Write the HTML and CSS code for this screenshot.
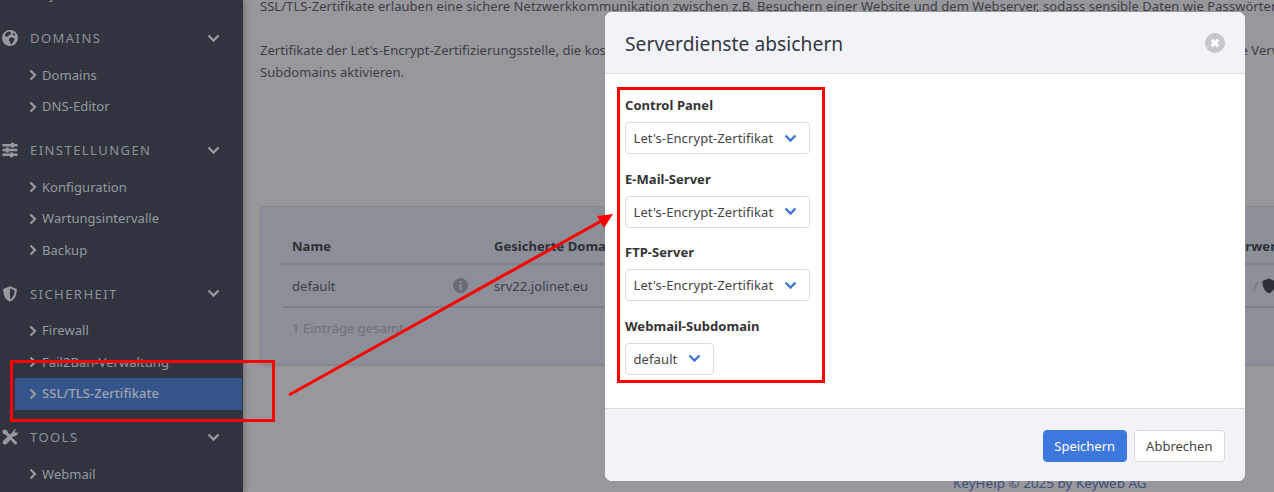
FILE: index.html
```html
<!DOCTYPE html>
<html lang="de">
<head>
<meta charset="utf-8">
<title>SSL/TLS-Zertifikate</title>
<link rel="stylesheet" href="styles.css">
</head>
<body>
<div class="page">
  <aside class="sidebar">
    <a class="item first"><svg class="caret" viewBox="0 0 8 12"><path d="M1.500 1.500 6 6l-4.500 4.500"/></svg>System</a>
    <div class="section">
      <svg class="sec-icon" viewBox="0 0 16 16"><path fill-rule="evenodd" d="M8 0a8 8 0 1 0 0 16A8 8 0 0 0 8 0ZM4.800 2.200 7.800 1.500l1.300 1.200-.8 2-1.600.4-.5 1.400-1.800.3L2.600 5l2.200-2.800Zm4 5.100 3 .6.900 1.600-1.500 2.500-1.200 1.800-1.400.4-.6-2.800-1.200-1.200.4-1.700 1.600-1.200ZM11.300 2.700l2.100 2.100-1.300.9-1.400-1.400.6-1.600Z"/></svg>
      <span class="sec-name">Domains</span>
      <svg class="sec-chev" viewBox="0 0 13 9"><path d="M1.500 1.500 6.500 6.500l5-5"/></svg>
    </div>
    <a class="item"><svg class="caret" viewBox="0 0 8 12"><path d="M1.500 1.500 6 6l-4.500 4.500"/></svg>Domains</a>
    <a class="item"><svg class="caret" viewBox="0 0 8 12"><path d="M1.500 1.500 6 6l-4.500 4.500"/></svg>DNS-Editor</a>
    <div class="section">
      <svg class="sec-icon" viewBox="0 0 16 16"><path d="M.5 2h15v2.400H.5zM.5 6.800h15v2.400H.5zM.5 11.600h15V14H.5z"/><path d="M9 .8h3v4.800H9zM3.800 5.600h3v4.800h-3zM8 10.400h3v4.800H8z"/></svg>
      <span class="sec-name">Einstellungen</span>
      <svg class="sec-chev" viewBox="0 0 13 9"><path d="M1.500 1.500 6.500 6.500l5-5"/></svg>
    </div>
    <a class="item"><svg class="caret" viewBox="0 0 8 12"><path d="M1.500 1.500 6 6l-4.500 4.500"/></svg>Konfiguration</a>
    <a class="item"><svg class="caret" viewBox="0 0 8 12"><path d="M1.500 1.500 6 6l-4.500 4.500"/></svg>Wartungsintervalle</a>
    <a class="item"><svg class="caret" viewBox="0 0 8 12"><path d="M1.500 1.500 6 6l-4.500 4.500"/></svg>Backup</a>
    <div class="section">
      <svg class="sec-icon" viewBox="0 0 16 16"><path fill-rule="evenodd" d="M8 .2 14.800 3c0 6.200-1.600 10.200-6.800 12.800C2.800 13.200 1.200 9.200 1.200 3L8 .2Zm0 2.300v10.900c3.100-1.900 4.400-4.700 4.600-8.900L8 2.500Z"/></svg>
      <span class="sec-name">Sicherheit</span>
      <svg class="sec-chev" viewBox="0 0 13 9"><path d="M1.500 1.500 6.500 6.500l5-5"/></svg>
    </div>
    <a class="item"><svg class="caret" viewBox="0 0 8 12"><path d="M1.500 1.500 6 6l-4.500 4.500"/></svg>Firewall</a>
    <a class="item"><svg class="caret" viewBox="0 0 8 12"><path d="M1.500 1.500 6 6l-4.500 4.500"/></svg>Fail2Ban-Verwaltung</a>
    <a class="item active"><svg class="caret" viewBox="0 0 8 12"><path d="M1.500 1.500 6 6l-4.500 4.500"/></svg>SSL/TLS-Zertifikate</a>
    <div class="section">
      <svg class="sec-icon" viewBox="0 0 16 16"><path d="M2.200.2 5.200 1.400l.7 2.200L8 5.700 10.600 3c.4-1.500 1.800-3 4-2.800L12.700 2.300l.4 1.300 1.400.3L16 2.400c.4 2.500-1.500 5-4.400 4.800L10 8.800l5 4.400-.2 1.800-1.800.8-4.500-5L4 15.800 .6 14.700 1 12l4.500-4.200L3.400 5.500 1.200 4.900.2 2.300z"/></svg>
      <span class="sec-name">Tools</span>
      <svg class="sec-chev" viewBox="0 0 13 9"><path d="M1.500 1.500 6.500 6.500l5-5"/></svg>
    </div>
    <a class="item"><svg class="caret" viewBox="0 0 8 12"><path d="M1.500 1.500 6 6l-4.500 4.500"/></svg>Webmail</a>
  </aside>

  <main class="main">
    <p class="intro">SSL/TLS-Zertifikate erlauben eine sichere Netzwerkkommunikation zwischen z.B. Besuchern einer Website und dem Webserver, sodass sensible Daten wie Passwörter geschützt werden.</p>
    <p class="intro second">Zertifikate der Let's-Encrypt-Zertifizierungsstelle, die kostenlos ausgestellt sind, können Sie für Domains und Subdomains im Control Panel anfordern und für die Verwendung<br>Subdomains aktivieren.</p>
    <section class="card">
      <div class="row head">
        <span class="cell">Name</span>
        <span class="cell">Gesicherte Domains</span>
        <span class="cell end">Serververwendung</span>
      </div>
      <div class="row body">
        <span class="cell name-cell">default
          <svg class="info" viewBox="0 0 14 14"><circle cx="7" cy="7" r="7"/><path class="info-dot" d="M6 2.800h2v1.800H6zM6 5.800h2v5.400H6z"/></svg>
        </span>
        <span class="cell">srv22.jolinet.eu</span>
        <span class="cell end usage"><i class="slash">/</i><svg class="shield" viewBox="0 0 14 16"><path d="M7 .5 13.500 3c0 6-1.500 10-6.500 12.500C2 13 .5 9 .5 3L7 .5Z"/></svg></span>
      </div>
      <p class="total">1 Einträge gesamt</p>
    </section>
    <p class="copyright">KeyHelp © 2025 by Keyweb AG</p>
  </main>
</div>

<div class="dialog">
  <header class="dialog-head">
    <h2 class="dialog-title">Serverdienste absichern</h2>
    <span class="close"><svg viewBox="0 0 20 20"><path d="M6.800 6.800l6.400 6.400M13.200 6.800l-6.400 6.400"/></svg></span>
  </header>
  <div class="dialog-body">
    <div class="field">
      <span class="label">Control Panel</span>
      <div class="select">Let's-Encrypt-Zertifikat<svg viewBox="0 0 13 9"><path d="M1.500 1.500 6.500 6.500l5-5"/></svg></div>
    </div>
    <div class="field">
      <span class="label">E-Mail-Server</span>
      <div class="select">Let's-Encrypt-Zertifikat<svg viewBox="0 0 13 9"><path d="M1.500 1.500 6.500 6.500l5-5"/></svg></div>
    </div>
    <div class="field">
      <span class="label">FTP-Server</span>
      <div class="select">Let's-Encrypt-Zertifikat<svg viewBox="0 0 13 9"><path d="M1.500 1.500 6.500 6.500l5-5"/></svg></div>
    </div>
    <div class="field">
      <span class="label">Webmail-Subdomain</span>
      <div class="select">default<svg viewBox="0 0 13 9"><path d="M1.500 1.500 6.500 6.500l5-5"/></svg></div>
    </div>
  </div>
  <footer class="dialog-foot">
    <button class="btn primary">Speichern</button>
    <button class="btn">Abbrechen</button>
  </footer>
</div>

<svg class="annotations" viewBox="0 0 1274 492">
  <rect x="11.500" y="361.500" width="262" height="59"/>
  <rect x="618.500" y="88.500" width="205" height="293"/>
  <line x1="289" y1="395" x2="603" y2="220"/>
  <polygon points="613,214 597,216 604,228"/>
</svg>
</body>
</html>
```
FILE: styles.css
```css
* { box-sizing: border-box; }
html, body { margin: 0; height: 492px; overflow: hidden; }
body {
  position: relative;
  font-family: "Noto Sans", sans-serif;
  font-size: 13px;
  letter-spacing: .05px;
  color: #3a3b40;
  background: #97979c;
}
.page { display: flex; height: 492px; overflow: hidden; }

/* sidebar */
.sidebar {
  flex: 0 0 243px;
  background: #30343f;
  color: #97999f;
  box-shadow: 2px 0 5px rgba(0, 0, 0, .22);
  position: relative;
  z-index: 1;
  overflow: hidden;
}
.item {
  display: flex;
  align-items: center;
  height: 31.500px;
  margin-left: 15px;
  margin-right: 1px;
  padding-left: 14px;
  font-size: 13px;
  line-height: 1;
  white-space: nowrap;
}
.item.first { margin-top: -21px; }
.item.active { background: #355489; color: #9da4b4; font-weight: 500; }
.caret {
  width: 8px; height: 12px;
  margin-right: 5px;
  fill: none; stroke: #97999f; stroke-width: 2.200;
}
.section {
  display: flex;
  align-items: center;
  height: 30px;
  margin-top: 12.500px;
  margin-bottom: 6.500px;
  padding-left: 2px;
  color: #8f9198;
}
.sec-icon { width: 16px; height: 16px; fill: #97999f; flex: none; }
.sec-name {
  margin-left: 12px;
  font-size: 13px;
  letter-spacing: 1.450px;
  text-transform: uppercase;
  flex: 1;
}
.sec-chev {
  width: 13px; height: 9px;
  margin-right: 23px;
  fill: none; stroke: #97999f; stroke-width: 2.400;
}

/* main */
.main {
  flex: 1;
  min-width: 0;
  padding-left: 17px;
  overflow: hidden;
}
.intro {
  margin: -5px 0 0;
  font-size: 13px;
  line-height: 22px;
  white-space: nowrap;
  color: #3e3f45;
}
.intro.second { margin-top: 22px; }
.card {
  width: 1120px;
  height: 159px;
  margin-top: 123px;
  padding: 22px 21px 21px;
  background: #8c8e98;
  border: 1px solid #85878f;
  border-radius: 5px;
  box-shadow: 0 1px 2px rgba(0,0,0,.12);
}
.row {
  display: grid;
  grid-template-columns: 202px 1fr auto;
  align-items: center;
  border-bottom: 2px solid #7f8089;
}
.row.head { height: 36px; font-weight: 700; color: #2f3036; }
.row.body { height: 43px; color: #3e3f45; }
.cell { padding-left: 10px; }
.end { width: 170px; padding-left: 0; white-space: nowrap; }
.name-cell { display: flex; align-items: center; justify-content: space-between; padding-right: 16px; }
.info { width: 15px; height: 15px; fill: #696b74; }
.info-dot { fill: #8c8e98; }
.usage { display: flex; align-items: center; padding-left: 65px; }
.slash { font-style: normal; color: #70727b; margin-right: 4px; }
.shield { width: 14px; height: 16px; fill: #2d2f37; flex: none; }
.total { margin: 11px 0 0 10px; color: #6f717b; line-height: 18px; }
.copyright {
  margin: 109px 0 0 693px;
  font-size: 13.400px;
  color: #3f4f7a;
  white-space: nowrap;
}

/* dialog */
.dialog {
  position: absolute;
  z-index: 2;
  left: 605px; top: 12px;
  width: 640px; height: 469px;
  display: flex; flex-direction: column;
  background: #fff;
  border-radius: 7px;
  overflow: hidden;
}
.dialog-head {
  flex: 0 0 62px;
  display: flex; align-items: center; justify-content: space-between;
  padding: 2px 20px 0;
  background: #f1f3f9;
  border-bottom: 1px solid #dcdde1;
}
.dialog-title { margin: 0; font-size: 19.200px; font-weight: 400; color: #33373f; }
.close { width: 20px; height: 20px; margin-top: -2px; border-radius: 50%; background: #c6c6cc; display: block; }
.close svg { display: block; width: 20px; height: 20px; fill: none; stroke: #fff; stroke-width: 3; }
.dialog-body { flex: 1; padding: 21px 20px 0; }
.field { height: 73.670px; }
.label { display: block; height: 20px; margin-bottom: 7px; font-weight: 700; font-size: 13px; line-height: 20px; color: #333; }
.select {
  display: inline-flex;
  align-items: center;
  height: 32px;
  padding: 0 12px 0 7.500px;
  gap: 10.500px;
  font-size: 13px;
  letter-spacing: .1px;
  color: #444;
  background: #fff;
  border: 1px solid #dbdbdb;
  border-radius: 4px;
}
.select svg { width: 13px; height: 9px; fill: none; stroke: #3f76de; stroke-width: 2.400; }
.dialog-foot {
  flex: 0 0 73px;
  display: flex; justify-content: flex-end; align-items: flex-start; gap: 7px;
  padding: 21px 20px 0;
  background: #f1f3f9;
  border-top: 1px solid #dcdde1;
}
.btn {
  height: 32px;
  padding: 0 11.500px;
  font: 13px "Noto Sans", sans-serif;
  color: #444;
  background: #fff;
  border: 1px solid #dbdbdb;
  border-radius: 4px;
}
.btn.primary { padding: 0 10.500px; background: #3e78df; border-color: #3e78df; color: #fff; }

/* annotations */
.annotations { position: absolute; z-index: 3; left: 0; top: 0; width: 1274px; height: 492px; pointer-events: none; }
.annotations rect { fill: none; stroke: #f00; stroke-width: 3; }
.annotations line { stroke: #f00; stroke-width: 3; }
.annotations polygon { fill: #f00; }
```
